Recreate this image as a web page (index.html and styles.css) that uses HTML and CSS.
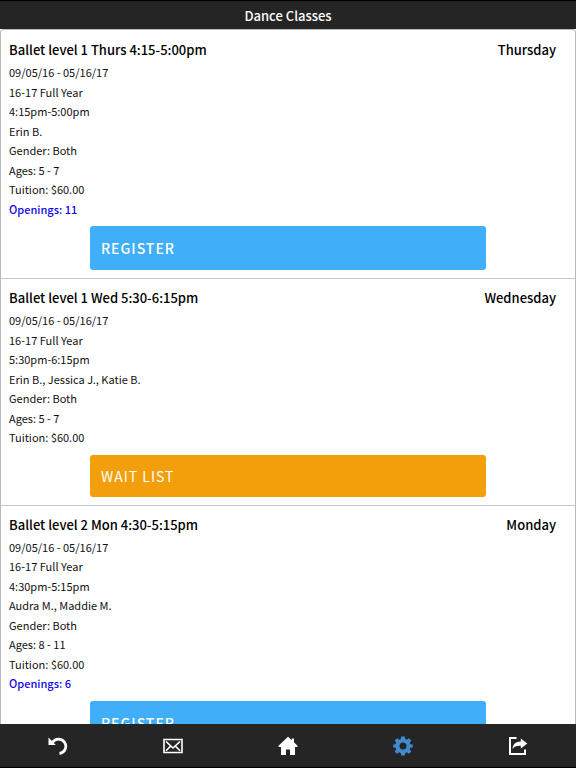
FILE: index.html
```html
<!DOCTYPE html>
<html lang="en">
<head>
<meta charset="utf-8">
<meta name="viewport" content="width=device-width, initial-scale=1">
<title>Dance Classes</title>
<link rel="stylesheet" href="styles.css">
</head>
<body>
<header class="topbar"><h1>Dance Classes</h1></header>
<main class="classes">
  <article class="class-card">
    <div class="class-head"><h2>Ballet level 1 Thurs 4:15-5:00pm</h2><span class="day">Thursday</span></div>
    <ul class="details">
      <li>09/05/16 - 05/16/17</li>
      <li>16-17 Full Year</li>
      <li>4:15pm-5:00pm</li>
      <li>Erin B.</li>
      <li>Gender: Both</li>
      <li>Ages: 5 - 7</li>
      <li>Tuition: $60.00</li>
      <li class="openings">Openings: 11</li>
    </ul>
    <button type="button" class="action register">REGISTER</button>
  </article>
  <article class="class-card">
    <div class="class-head"><h2>Ballet level 1 Wed 5:30-6:15pm</h2><span class="day">Wednesday</span></div>
    <ul class="details">
      <li>09/05/16 - 05/16/17</li>
      <li>16-17 Full Year</li>
      <li>5:30pm-6:15pm</li>
      <li>Erin B., Jessica J., Katie B.</li>
      <li>Gender: Both</li>
      <li>Ages: 5 - 7</li>
      <li>Tuition: $60.00</li>
    </ul>
    <button type="button" class="action waitlist">WAIT LIST</button>
  </article>
  <article class="class-card">
    <div class="class-head"><h2>Ballet level 2 Mon 4:30-5:15pm</h2><span class="day">Monday</span></div>
    <ul class="details">
      <li>09/05/16 - 05/16/17</li>
      <li>16-17 Full Year</li>
      <li>4:30pm-5:15pm</li>
      <li>Audra M., Maddie M.</li>
      <li>Gender: Both</li>
      <li>Ages: 8 - 11</li>
      <li>Tuition: $60.00</li>
      <li class="openings">Openings: 6</li>
    </ul>
    <button type="button" class="action register">REGISTER</button>
  </article>
</main>
<nav class="tabbar" aria-label="Main">
  <a href="#back" aria-label="Back"><svg viewBox="0 0 20 20"><path d="M4.5 6.5A7.2 7.2 0 1 1 11.5 17.5" fill="none" stroke="currentColor" stroke-width="2.8"/><path d="M.5 1.5V9h7.3z" fill="currentColor"/></svg></a>
  <a href="#mail" aria-label="Mail"><svg viewBox="0 0 20 20" fill="none" stroke="currentColor"><path d="M1 3.5h18v13H1z" stroke-width="1.6"/><path d="M3 5.5l7 6.5 7-6.5M3 14.8l4.5-4.6M17 14.8l-4.5-4.6" stroke-width="1.6"/></svg></a>
  <a href="#home" aria-label="Home"><svg viewBox="0 0 20 20" fill="currentColor"><path d="M10 .7L13.8 4.2V2.5H16v3.8l3.7 3.6-.5 1.1H17v8h-5v-5.4H8V19H3v-8H.8l-.5-1.1z"/></svg></a>
  <a href="#settings" class="current" aria-label="Settings" aria-current="page"><svg viewBox="0 0 20 20" fill="currentColor"><path fill-rule="evenodd" d="M8.2.5h3.6l.5 2.6 1.4.6 2.2-1.5 2.4 2.4-1.5 2.2.6 1.4 2.3.4v2.8l-2.3.4-.6 1.4 1.5 2.2-2.4 2.4-2.2-1.5-1.4.6-.5 2.6H8.2l-.5-2.6-1.4-.6-2.2 1.5-2.4-2.4 1.5-2.2-.6-1.4-2.3-.4V8.6l2.3-.4.6-1.4L1.7 4.6l2.4-2.4 2.2 1.5 1.4-.6zM10 6.5a3.5 3.5 0 1 0 0 7 3.5 3.5 0 1 0 0-7z"/></svg></a>
  <a href="#share" aria-label="Share"><svg viewBox="0 0 20 20"><path d="M8.5 2H2v16h15v-4.5" fill="none" stroke="currentColor" stroke-width="2"/><path d="M12.8 2.5l6.5 5-6.5 5V9.700C8.500 9.500 6.300 10.500 4.500 13 4.700 8.300 7.500 5.500 12.800 5.400z" fill="currentColor"/></svg></a>
</nav>
</body>
</html>
```
FILE: styles.css
```css
* { box-sizing: border-box; }

body {
  display: flex;
  flex-direction: column;
  height: 100vh;
  margin: 0;
  background: #fff;
  color: #111;
  font-family: "Noto Sans CJK SC", "Open Sans", sans-serif;
}

h1, h2, ul { margin: 0; padding: 0; }

.topbar {
  flex: none;
  padding: 4px 0 3px;
  border-top: 1px solid #000;
  background: #252525;
  color: #fff;
  text-align: center;
}

.topbar h1 {
  font-size: 13px;
  font-weight: 500;
  line-height: 21px;
}

.classes {
  flex: 1;
  min-height: 0;
  padding-top: 1px;
  overflow-y: auto;
  scrollbar-width: none;
  border: 1px solid #b9b9b9;
  border-bottom: 0;
  border-radius: 4px 4px 0 0;
}

.class-card {
  padding: 9px 8px 8px;
  border-bottom: 1px solid #c8c8c8;
}

.class-head {
  display: flex;
  justify-content: space-between;
  margin-bottom: 3px;
  padding-right: 11px;
  color: #000;
  font-size: 13px;
  font-weight: 500;
  line-height: 20px;
}

.class-head h2 { font: inherit; }

.details {
  font-size: 13px;
  line-height: 1.5em;
  list-style: none;
}

.details li { font-size: 11px; }

.details .openings {
  color: #1008ee;
  font-weight: 500;
}

.action {
  display: block;
  width: 71%;
  margin: 7px auto 0;
  padding: 10px;
  border: 1px solid transparent;
  border-radius: 3px;
  color: #fff;
  font-family: inherit;
  font-size: 14px;
  letter-spacing: 1px;
  line-height: 20px;
  text-align: left;
}

.register {
  padding-block: 11px;
  background: #40aef9;
  font-weight: 500;
}

.waitlist {
  background: #f39f0c;
  font-weight: 400;
}

.tabbar {
  display: flex;
  flex: none;
  border-bottom: 1px solid #000;
  background: #252525;
}

.tabbar a {
  display: flex;
  flex: 1;
  justify-content: center;
  padding: 12px 0 11px;
  color: #fff;
}

.tabbar a.current { color: #408bd0; }

.tabbar svg {
  width: 20px;
  height: 20px;
}
```
